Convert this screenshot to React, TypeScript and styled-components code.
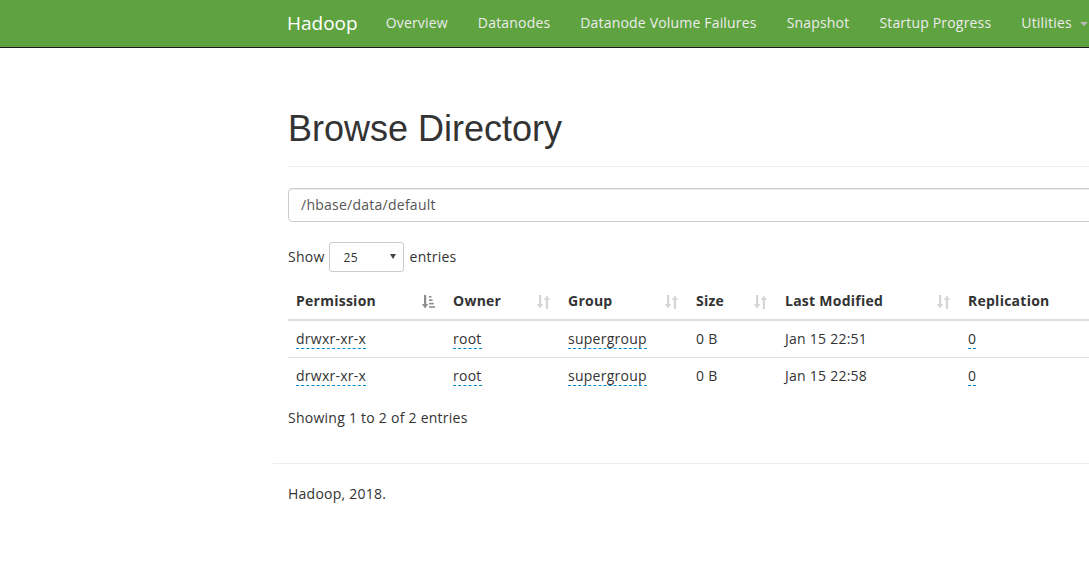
import React from "react";
import styled, { createGlobalStyle } from "styled-components";

const GlobalStyle = createGlobalStyle`
  html, body {
    margin: 0;
    padding: 0;
    overflow: hidden;
    background: #fff;
  }
  body {
    font-family: "Open Sans", "Noto Sans", sans-serif;
    font-size: 14px;
    line-height: 20px;
    letter-spacing: 0.25px;
    color: #333;
  }
  * { box-sizing: border-box; }
`;

const Navbar = styled.nav`
  height: 48px;
  background: #5fa341;
  border-bottom: 1px solid #1c1c1c;
`;

const Container = styled.div`
  width: 1170px;
  margin-left: 273px;
  padding: 0 15px;
`;

const NavInner = styled(Container)`
  display: flex;
  align-items: center;
  height: 47px;
  padding-bottom: 2px;
`;

const Brand = styled.a`
  font-size: 19px;
  line-height: 20px;
  letter-spacing: 0;
  color: #fff;
  text-decoration: none;
  margin-left: -1px;
  padding-right: 13px;
`;

const NavLink = styled.a`
  color: #ececec;
  text-decoration: none;
  padding: 0 15px;
  line-height: 20px;
  letter-spacing: 0.18px;
  display: flex;
  align-items: center;
  white-space: nowrap;
`;

const Caret = styled.span`
  display: inline-block;
  width: 0;
  height: 0;
  margin-left: 8px;
  margin-top: 2px;
  border-top: 4px solid #b8b8b8;
  border-left: 4px solid transparent;
  border-right: 4px solid transparent;
`;

const PageHeader = styled.div`
  margin-top: 61px;
  padding-bottom: 17px;
  border-bottom: 1px solid #eee;
`;

const Title = styled.h1`
  margin: 0;
  font-family: "Liberation Sans", Arial, sans-serif;
  font-weight: 500;
  font-size: 36px;
  line-height: 40px;
  letter-spacing: 0;
  color: #333;
`;

const PathInput = styled.div`
  margin-top: 21px;
  height: 34px;
  border: 1px solid #ccc;
  border-radius: 4px;
  padding: 0 12px;
  display: flex;
  align-items: center;
  color: #555;
  box-shadow: inset 0 1px 1px rgba(0, 0, 0, 0.075);
`;

const LengthRow = styled.div`
  margin-top: 20px;
  display: flex;
  align-items: center;
  gap: 4px;
`;

const SelectBox = styled.div`
  width: 75px;
  height: 30px;
  border: 1px solid #ccc;
  border-radius: 3px;
  display: flex;
  align-items: center;
  justify-content: space-between;
  padding: 2px 7px 0 14px;
  font-size: 12px;
  color: #333;
  margin-right: 2px;
`;

const SelectCaret = styled.span`
  width: 0;
  height: 0;
  border-top: 5px solid #444;
  border-left: 3px solid transparent;
  border-right: 3px solid transparent;
  margin-top: -3px;
`;

const Table = styled.table`
  margin-top: 11px;
  width: 100%;
  border-collapse: collapse;
  table-layout: fixed;
`;

const Th = styled.th<{ $w?: number }>`
  position: relative;
  width: ${(p) => (p.$w ? `${p.$w}px` : "auto")};
  text-align: left;
  font-weight: 700;
  padding: 8px 30px 8px 8px;
  line-height: 20px;
  border-bottom: 2px solid #ddd;
  white-space: nowrap;
`;

const SortIcon = styled.svg<{ $active?: boolean }>`
  position: absolute;
  right: 10px;
  bottom: 10px;
  width: 13px;
  height: 14px;
  fill: #333;
  opacity: ${(p) => (p.$active ? 0.55 : 0.2)};
`;

const Td = styled.td`
  padding: 8px;
  line-height: 20px;
  border-top: 1px solid #ddd;
  white-space: nowrap;
`;

const Editable = styled.a`
  color: #333;
  text-decoration: none;
  border-bottom: 1px dashed #0088cc;
`;

const Info = styled.div`
  margin-top: 14px;
`;

const FooterRule = styled.hr`
  margin: 35px -15px 20px;
  border: 0;
  border-top: 1px solid #eee;
`;

const FooterText = styled.p`
  margin: 0;
`;

function SortBoth() {
  return (
    <SortIcon viewBox="0 0 13 14">
      <rect x="2" y="0" width="2.2" height="9.5" />
      <polygon points="0,9 6.2,9 3.1,13.5" />
      <polygon points="6.8,5 13,5 9.9,0.5" />
      <rect x="8.8" y="4.5" width="2.2" height="9.5" />
    </SortIcon>
  );
}

function SortAsc() {
  return (
    <SortIcon viewBox="0 0 13 14" $active>
      <rect x="2" y="0" width="2.2" height="9.5" />
      <polygon points="0,9 6.2,9 3.1,13.5" />
      <rect x="7" y="1" width="2.4" height="1.6" />
      <rect x="7" y="4.4" width="3.6" height="1.6" />
      <rect x="7" y="7.8" width="4.8" height="1.6" />
      <rect x="7" y="11.2" width="6" height="1.6" />
    </SortIcon>
  );
}

const columns = [
  { name: "Permission", w: 157, active: true },
  { name: "Owner", w: 115 },
  { name: "Group", w: 128 },
  { name: "Size", w: 89 },
  { name: "Last Modified", w: 183 },
  { name: "Replication" },
];

const rows = [
  { perm: "drwxr-xr-x", owner: "root", group: "supergroup", size: "0 B", mod: "Jan 15 22:51", rep: "0" },
  { perm: "drwxr-xr-x", owner: "root", group: "supergroup", size: "0 B", mod: "Jan 15 22:58", rep: "0" },
];

export default function App() {
  return (
    <>
      <GlobalStyle />
      <Navbar>
        <NavInner>
          <Brand href="#">Hadoop</Brand>
          <NavLink href="#">Overview</NavLink>
          <NavLink href="#">Datanodes</NavLink>
          <NavLink href="#">Datanode Volume Failures</NavLink>
          <NavLink href="#">Snapshot</NavLink>
          <NavLink href="#">Startup Progress</NavLink>
          <NavLink href="#">
            Utilities
            <Caret />
          </NavLink>
        </NavInner>
      </Navbar>
      <Container>
        <PageHeader>
          <Title>Browse Directory</Title>
        </PageHeader>
        <PathInput>/hbase/data/default</PathInput>
        <LengthRow>
          <span>Show</span>
          <SelectBox>
            <span>25</span>
            <SelectCaret />
          </SelectBox>
          <span>entries</span>
        </LengthRow>
        <Table>
          <thead>
            <tr>
              {columns.map((c) => (
                <Th key={c.name} $w={c.w}>
                  {c.name}
                  {c.active ? <SortAsc /> : c.w ? <SortBoth /> : null}
                </Th>
              ))}
            </tr>
          </thead>
          <tbody>
            {rows.map((r, i) => (
              <tr key={i}>
                <Td><Editable href="#">{r.perm}</Editable></Td>
                <Td><Editable href="#">{r.owner}</Editable></Td>
                <Td><Editable href="#">{r.group}</Editable></Td>
                <Td>{r.size}</Td>
                <Td>{r.mod}</Td>
                <Td><Editable href="#">{r.rep}</Editable></Td>
              </tr>
            ))}
          </tbody>
        </Table>
        <Info>Showing 1 to 2 of 2 entries</Info>
        <FooterRule />
        <FooterText>Hadoop, 2018.</FooterText>
      </Container>
    </>
  );
}
